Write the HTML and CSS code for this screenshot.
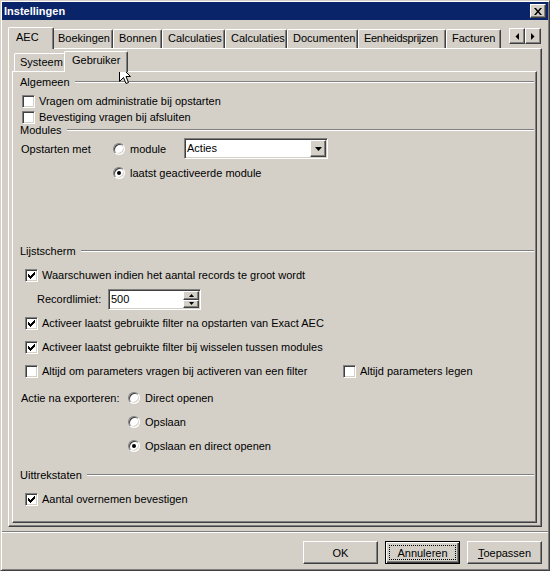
FILE: index.html
```html
<!DOCTYPE html>
<html>
<head>
	<meta charset="utf-8">
	<title>Instellingen</title>
	<link rel="stylesheet" href="styles.css">
</head>
<body>
	<div class="window">

		<div class="titlebar">
			<span class="title">Instellingen</span>
			<span class="btn close-btn">
				<svg width="8" height="7" viewBox="0 0 8 7"><path d="M0 0h2l2 2.5L6 0h2L5 3.5 8 7H6L4 4.5 2 7H0l3-3.5z"/></svg>
			</span>
		</div>

		<div class="dialog">

			<div class="tabstrip">
				<div class="tabs">
					<div class="tab selected">AEC</div>
					<div class="tab">Boekingen</div>
					<div class="tab">Bonnen</div>
					<div class="tab">Calculaties</div>
					<div class="tab">Calculaties</div>
					<div class="tab">Documenten</div>
					<div class="tab">Eenheidsprijzen</div>
					<div class="tab">Facturen</div>
				</div>
				<div class="tab-scroll">
					<span class="btn scroll-btn"><svg width="4" height="7" viewBox="0 0 4 7"><path d="M4 0v7L0.5 3.5z"/></svg></span>
					<span class="btn scroll-btn"><svg width="4" height="7" viewBox="0 0 4 7"><path d="M0 0v7l3.5-3.5z"/></svg></span>
				</div>
			</div>

			<div class="panel">

				<div class="subtabs">
					<div class="tab">Systeem</div>
					<div class="tab selected">Gebruiker</div>
				</div>

				<div class="subpanel">

					<div class="group-head">Algemeen</div>
					<div class="options">
						<div class="row"><span class="check"></span>Vragen om administratie bij opstarten</div>
						<div class="row"><span class="check"></span>Bevestiging vragen bij afsluiten</div>
					</div>

					<div class="group-head">Modules</div>
					<div class="modules">
						<div class="row combo-row">
							<span class="field-label">Opstarten met</span>
							<span class="choice"><span class="radio"></span>module</span>
							<div class="combo">
								<span class="combo-text">Acties</span>
								<span class="btn combo-btn"><svg width="7" height="4" viewBox="0 0 7 4"><path d="M0 0h7L3.5 4z"/></svg></span>
							</div>
						</div>
						<div class="row indent-radio"><span class="radio on"></span>laatst geactiveerde module</div>
					</div>

					<div class="group-head">Lijstscherm</div>
					<div class="options list">
						<div class="row"><span class="check"><svg width="11" height="11" viewBox="0 0 11 11"><path d="M2 4H3V5H4V6H5V5H6V4H7V3H8V2H9V5H8V6H7V7H6V8H5V9H4V8H3V7H2Z"/></svg></span>Waarschuwen indien het aantal records te groot wordt</div>
						<div class="row">
							<span class="limit-label">Recordlimiet:</span>
							<div class="spin">
								<span class="spin-text">500</span>
								<span class="spin-btns">
									<span class="btn spin-btn"><svg width="5" height="3" viewBox="0 0 5 3"><path d="M2.5 0L5 3H0z"/></svg></span>
									<span class="btn spin-btn"><svg width="5" height="3" viewBox="0 0 5 3"><path d="M0 0h5L2.5 3z"/></svg></span>
								</span>
							</div>
						</div>
						<div class="row"><span class="check"><svg width="11" height="11" viewBox="0 0 11 11"><path d="M2 4H3V5H4V6H5V5H6V4H7V3H8V2H9V5H8V6H7V7H6V8H5V9H4V8H3V7H2Z"/></svg></span>Activeer laatst gebruikte filter na opstarten van Exact AEC</div>
						<div class="row"><span class="check"><svg width="11" height="11" viewBox="0 0 11 11"><path d="M2 4H3V5H4V6H5V5H6V4H7V3H8V2H9V5H8V6H7V7H6V8H5V9H4V8H3V7H2Z"/></svg></span>Activeer laatst gebruikte filter bij wisselen tussen modules</div>
						<div class="row">
							<span class="wide-option"><span class="check"></span>Altijd om parameters vragen bij activeren van een filter</span>
							<span class="check"></span>Altijd parameters legen
						</div>

						<div class="export">
							<div class="row">
								<span class="export-label">Actie na exporteren:</span>
								<span class="radio"></span>Direct openen
							</div>
							<div class="row indent-export"><span class="radio"></span>Opslaan</div>
							<div class="row indent-export"><span class="radio on"></span>Opslaan en direct openen</div>
						</div>
					</div>

					<div class="group-head">Uittrekstaten</div>
					<div class="options list">
						<div class="row"><span class="check"><svg width="11" height="11" viewBox="0 0 11 11"><path d="M2 4H3V5H4V6H5V5H6V4H7V3H8V2H9V5H8V6H7V7H6V8H5V9H4V8H3V7H2Z"/></svg></span>Aantal overnemen bevestigen</div>
					</div>

				</div>
			</div>

			<div class="separator"></div>

			<div class="buttons">
				<span class="btn push">OK</span>
				<span class="btn push default"><span class="focus">Annuleren</span></span>
				<span class="btn push"><span><u>T</u>oepassen</span></span>
			</div>

		</div>
	</div>

	<svg class="cursor" width="13" height="20" viewBox="0 0 13 20"><path d="M0.5 0.5V16.5L4.5 12.5L7 18.5L9.5 17.5L7 11.5H11.5Z" fill="#fff" stroke="#000"/></svg>
</body>
</html>
```

FILE: styles.css
```css
body
{
	margin: 0;
	background: #d4d0c8;
	font-family: "Liberation Sans", Arial, sans-serif;
	font-size: 11px;
	color: #000;
}

.window,
.window *
{
	box-sizing: border-box;
}

.window
{
	width: 550px;
	height: 571px;
	display: flex;
	flex-direction: column;
	padding: 1px;
	background: #d4d0c8;
	border: 1px solid;
	border-color: #d4d0c8 #404040 #404040 #d4d0c8;
	box-shadow: inset 1px 1px #fff, inset -1px -1px #808080;
}

/* raised 3d button look, used by every button */
.btn
{
	display: flex;
	align-items: center;
	justify-content: center;
	background: #d4d0c8;
	border: 1px solid;
	border-color: #fff #404040 #404040 #fff;
	box-shadow: inset -1px -1px #808080;
}

.btn svg { display: block; }

.titlebar
{
	flex: none;
	height: 18px;
	display: flex;
	align-items: center;
	padding: 0 2px;
	background: #0a246a;
	color: #fff;
	font-weight: bold;
}

.close-btn
{
	margin-left: auto;
	width: 16px;
	height: 14px;
}

.dialog
{
	flex: 1;
	display: flex;
	flex-direction: column;
	padding: 7px 6px 5px;
}

/* tabs */

.tabstrip
{
	flex: none;
	height: 21px;
	display: flex;
	align-items: flex-end;
}

.tabs,
.subtabs
{
	display: flex;
	align-items: flex-end;
	height: 100%;
	padding-left: 2px;
}

.tab
{
	height: 19px;
	padding-left: 5px;
	line-height: 17px;
	white-space: nowrap;
	background: #d4d0c8;
	border: 1px solid;
	border-bottom: 0;
	border-color: #fff #404040 #fff #fff;
	border-radius: 2px 2px 0 0;
	box-shadow: inset -1px 0 #808080;
}

.tab.selected
{
	position: relative;
	z-index: 1;
	height: 22px;
	margin: 0 -2px -1px;
	padding-left: 7px;
	line-height: 18px;
}

.tabs .tab:nth-child(1) { width: 46px; }
.tabs .tab:nth-child(2) { width: 61px; }
.tabs .tab:nth-child(3) { width: 49px; }
.tabs .tab:nth-child(4) { width: 63px; }
.tabs .tab:nth-child(5) { width: 62px; }
.tabs .tab:nth-child(6) { width: 71px; }
.tabs .tab:nth-child(7) { width: 88px; letter-spacing: -0.3px; }
.tabs .tab:nth-child(8) { width: 55px; }

.tab-scroll
{
	display: flex;
	align-self: flex-start;
	margin: 1px 1px 0 auto;
}

.scroll-btn
{
	width: 16px;
	height: 16px;
}

.panel,
.subpanel
{
	border: 1px solid;
	border-color: #fff #404040 #404040 #fff;
	box-shadow: inset -1px -1px #808080;
}

.panel
{
	flex: 1;
	display: flex;
	flex-direction: column;
	padding: 2px 4px 3px 3px;
}

.subtabs
{
	flex: none;
	height: 20px;
}

.subtabs .tab
{
	height: 18px;
}

.subtabs .tab.selected
{
	height: 21px;
	line-height: 17px;
}

.subtabs .tab:nth-child(1) { width: 52px; }
.subtabs .tab:nth-child(2) { width: 64px; }

.subpanel
{
	flex: 1;
	padding: 5px 2px 0 0;
}

/* group header with etched line */

.group-head
{
	height: 10px;
	display: flex;
	align-items: center;
	padding-left: 7px;
	white-space: nowrap;
}

.group-head::after
{
	content: "";
	flex: 1;
	margin-left: 5px;
	border-top: 1px solid #808080;
	border-bottom: 1px solid #fff;
}

.list + .group-head
{
	margin-top: 12px;
}

.row
{
	height: 16px;
	display: flex;
	align-items: center;
	white-space: nowrap;
}

.options
{
	margin-top: 6px;
	padding-left: 9px;
}

.options.list
{
	margin-top: 7px;
	padding-left: 12px;
}

.list .row
{
	height: 24px;
}

.modules
{
	height: 108px;
	margin-top: 3px;
	padding-left: 8px;
}

.modules .combo-row
{
	height: 21px;
	margin-bottom: 6px;
}

.field-label   { width: 92px; }
.choice        { width: 71px; display: flex; align-items: center; }
.indent-radio  { padding-left: 92px; }
.limit-label   { width: 71px; margin-left: 12px; }
.wide-option   { width: 318px; display: flex; align-items: center; }

.export
{
	margin: 3px 0 0 -4px;
}

.export-label   { width: 107px; }
.indent-export  { padding-left: 107px; }

/* checkbox and radio */

.check
{
	flex: none;
	width: 13px;
	height: 13px;
	margin-right: 4px;
	background: #fff;
	border: 1px solid;
	border-color: #808080 #fff #fff #808080;
	box-shadow: inset 1px 1px #404040, inset -1px -1px #d4d0c8;
}

.check svg { display: block; }

.radio
{
	position: relative;
	flex: none;
	width: 12px;
	height: 12px;
	margin-right: 5px;
	border-radius: 50%;
	background: #fff;
	border: 1px solid;
	border-color: #808080 #fff #fff #808080;
	box-shadow: inset 1px 1px #404040, inset -1px -1px #d4d0c8;
}

.radio.on::after
{
	content: "";
	position: absolute;
	left: 3px;
	top: 3px;
	width: 4px;
	height: 4px;
	border-radius: 50%;
	background: #000;
}

/* sunken fields */

.combo,
.spin
{
	display: flex;
	height: 21px;
	padding: 1px;
	background: #fff;
	border: 1px solid;
	border-color: #808080 #fff #fff #808080;
	box-shadow: inset 1px 1px #404040, inset -1px -1px #d4d0c8;
}

.combo      { width: 144px; }
.spin       { width: 93px; }

.combo-text,
.spin-text
{
	flex: 1;
	padding-left: 1px;
	line-height: 17px;
}

.combo-btn
{
	width: 16px;
	height: 17px;
}

.spin-btns
{
	display: flex;
	flex-direction: column;
}

.spin-btn
{
	width: 16px;
	height: 9px;
}

.spin-btn + .spin-btn
{
	height: 8px;
}

/* bottom buttons */

.separator
{
	flex: none;
	margin: 4px -6px 0;
	border-top: 1px solid #808080;
	border-bottom: 1px solid #fff;
}

.buttons
{
	flex: none;
	display: flex;
	justify-content: flex-end;
	gap: 7px;
	margin-top: 8px;
}

.push
{
	width: 75px;
	height: 23px;
}

.push.default
{
	padding: 3px;
	border-color: #000;
	box-shadow: inset 1px 1px #fff, inset -1px -1px #404040, inset -2px -2px #808080;
}

.focus
{
	flex: 1;
	align-self: stretch;
	display: flex;
	align-items: center;
	justify-content: center;
	border: 1px dotted #000;
}

.cursor
{
	position: absolute;
	left: 119px;
	top: 65px;
}
```
